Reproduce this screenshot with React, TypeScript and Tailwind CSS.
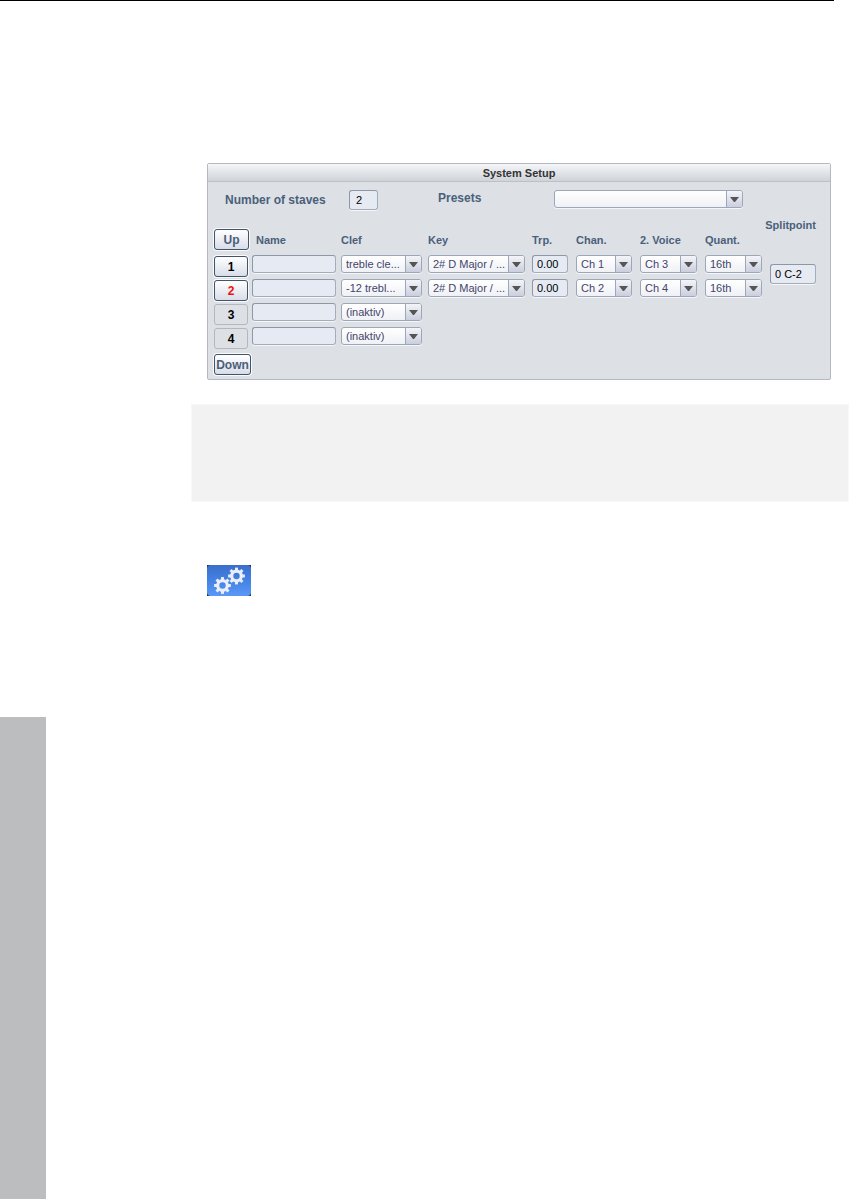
import React from 'react'
import clsx from 'clsx'

const labelText = 'text-[#4a607a] font-bold'
const field = 'border border-[#a3adba] border-t-[#8d97a8] border-l-[#8d97a8] rounded-[3px] bg-[#e6eaf3] text-[11px] shadow-[0_1px_0_#f6f6fa]'

type DropdownProps = {
  label: string
  value?: string
  className: string
}

const Dropdown = ({ label, value = '', className }: DropdownProps) => (
  <div className={clsx('relative', className)}>
    <select
      aria-label={label}
      defaultValue={value}
      className="block appearance-none w-full h-[18px] pl-1 pr-4 border border-[#9ca8b8] rounded-[3px] bg-linear-to-b from-white to-[#f0f1f6] text-[11px] leading-4 text-[#43456a] shadow-[0_1px_0_#f6f6fa]"
    >
      <option>{value}</option>
    </select>
    <span className="absolute right-px top-px bottom-px w-4 flex items-center justify-center border-l border-[#9ca8b8] rounded-r-[2px] bg-linear-to-b from-[#f4f5f9] to-[#cbcedd] pointer-events-none">
      <svg width="9" height="5" viewBox="0 0 9 5" fill="#555555">
        <path d="M0 0h9L5 5H4z" />
      </svg>
    </span>
  </div>
)

type PushButtonProps = {
  children: React.ReactNode
  className?: string
  flat?: boolean
}

const PushButton = ({ children, className, flat }: PushButtonProps) => (
  <button
    type="button"
    className={clsx(
      'h-[21px] border rounded-[3px] text-xs font-bold leading-4 text-center',
      flat
        ? 'border-[#b4b8be] bg-[#dde1e6]'
        : 'border-[#43536a] bg-linear-to-b from-white to-[#d8dde8] shadow-[0_0_0_1px_#f8fafc]',
      className,
    )}
  >
    {children}
  </button>
)

const staves = [
  { id: 1, clef: 'treble cle...', key: '2# D Major / ...', trp: '0.00', chan: 'Ch 1', voice: 'Ch 3', quant: '16th' },
  { id: 2, clef: '-12 trebl...', key: '2# D Major / ...', trp: '0.00', chan: 'Ch 2', voice: 'Ch 4', quant: '16th' },
  { id: 3, clef: '(inaktiv)' },
  { id: 4, clef: '(inaktiv)' },
]

const StaffTable = () => (
  <table className="self-start table-fixed w-[512px] mt-[11px]">
    <thead>
      <tr className={clsx('h-6 text-left text-[11px] leading-4', labelText)}>
        <th className="w-[89px] p-0 pl-1">Name</th>
        <th className="w-[87px] p-0">Clef</th>
        <th className="w-[104px] p-0">Key</th>
        <th className="w-[44px] p-0">Trp.</th>
        <th className="w-[64px] p-0">Chan.</th>
        <th className="w-[65px] p-0">2. Voice</th>
        <th className="w-[59px] p-0">Quant.</th>
      </tr>
    </thead>
    <tbody>
      {staves.map((s) => (
        <tr key={s.id} className="h-6">
          <td className="p-0">
            <input aria-label={`Name ${s.id}`} className={clsx(field, 'block w-[84px] h-[18px] px-1')} />
          </td>
          <td className="p-0">
            <Dropdown label={`Clef ${s.id}`} value={s.clef} className="w-[81px]" />
          </td>
          {s.key && (
            <>
              <td className="p-0">
                <Dropdown label={`Key ${s.id}`} value={s.key} className="w-[97px]" />
              </td>
              <td className="p-0">
                <input aria-label={`Transpose ${s.id}`} defaultValue={s.trp} className={clsx(field, 'block w-9 h-[18px] px-1')} />
              </td>
              <td className="p-0">
                <Dropdown label={`Channel ${s.id}`} value={s.chan} className="w-14" />
              </td>
              <td className="p-0">
                <Dropdown label={`Second voice ${s.id}`} value={s.voice} className="w-[57px]" />
              </td>
              <td className="p-0">
                <Dropdown label={`Quantize ${s.id}`} value={s.quant} className="w-[57px]" />
              </td>
            </>
          )}
        </tr>
      ))}
    </tbody>
  </table>
)

const SystemSetup = () => (
  <section className="ml-4 mr-[18px] border border-[#b4b9c1] rounded-[2px] bg-[#dde1e6]">
    <h1 className="h-[18px] border-b border-[#bcc1c7] bg-linear-to-b from-[#f4f6f9] to-[#d0d3d8] text-center text-[11px] leading-[18px] font-bold text-[#333333]">
      System Setup
    </h1>
    <div className="flex items-start pt-2 pl-[17px]">
      <label htmlFor="staves" className={clsx('w-[124px] text-xs leading-5', labelText)}>Number of staves</label>
      <input id="staves" defaultValue="2" className={clsx(field, 'w-[29px] h-5 pl-1.5')} />
      <span className={clsx('ml-[60px] w-[116px] text-xs leading-4', labelText)}>Presets</span>
      <Dropdown label="Presets" className="w-[189px]" />
    </div>
    <div className="flex mt-[7px] pl-1.5 pb-1">
      <div className="flex flex-col w-[38px] pt-3 gap-[3px]">
        <PushButton className="w-[35px] mb-[3px] text-[#4a607a]">Up</PushButton>
        <PushButton className="w-[34px]">1</PushButton>
        <PushButton className="w-[34px] text-[#f01010]">2</PushButton>
        <PushButton className="w-[34px]" flat>3</PushButton>
        <PushButton className="w-[34px]" flat>4</PushButton>
        <PushButton className="w-[37px] mt-0.5 text-[#4a607a]">Down</PushButton>
      </div>
      <StaffTable />
      <div className="flex flex-col items-end w-[52px]">
        <label htmlFor="splitpoint" className={clsx('text-[11px] leading-4', labelText)}>Splitpoint</label>
        <input id="splitpoint" defaultValue="0 C-2" className={clsx(field, 'w-[46px] h-5 mt-[31px] px-1')} />
      </div>
    </div>
  </section>
)

const Gear = ({ x, y }: { x: number; y: number }) => (
  <g transform={`translate(${x} ${y})`} stroke="#e9eef8">
    <circle r="4.8" strokeWidth="3.2" />
    {[0, 45, 90, 135, 180, 225, 270, 315].map((a) => (
      <path key={a} d="M0 -5.2V-8.4" strokeWidth="3" transform={`rotate(${a})`} />
    ))}
  </g>
)

const SettingsButton = () => (
  <button type="button" aria-label="Settings" className="block ml-4 mt-[63px] bg-[#26324a]">
    <svg width="44" height="31" viewBox="0 0 44 31" fill="none">
      <defs>
        <linearGradient id="blue" x1="0" y1="0" x2="0" y2="1">
          <stop offset="0" stopColor="#3a6fcb" />
          <stop offset="0.5" stopColor="#4482e4" />
          <stop offset="1" stopColor="#5b98f6" />
        </linearGradient>
      </defs>
      <rect width="44" height="31" rx="4" fill="url(#blue)" />
      <Gear x={15.5} y={20.5} />
      <Gear x={29.5} y={11} />
    </svg>
  </button>
)

const App = () => {
  return (
    <div className="min-h-screen flex flex-col bg-white text-black font-['Liberation_Sans',Arial,sans-serif]">
      <hr className="mr-[15px] border-t border-black" />
      <div className="flex flex-1">
        <aside className="w-[46px] mt-[716px] bg-[#bcbdbf]" />
        <main className="flex-1 ml-[145px] pt-[162px]">
          <SystemSetup />
          <div className="h-[98px] mt-6 border border-[#f8f8f8] bg-[#f2f2f2]" />
          <SettingsButton />
        </main>
      </div>
    </div>
  )
}

export default App
